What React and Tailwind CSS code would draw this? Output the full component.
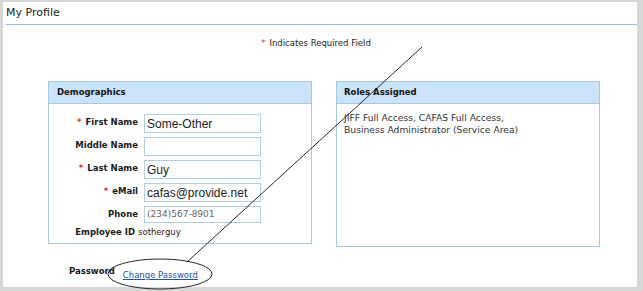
import React from "react";

const V = { fontFamily: '"DejaVu Sans", Verdana, sans-serif' };
const A = { fontFamily: '"Liberation Sans", Arial, sans-serif' };

function Row({ label, req, children, h = "h-[19px]" }) {
  return (
    <div className={`flex items-start ${h}`}>
      <div className="w-[95px] pr-[6px] pt-[3px] flex justify-end items-start text-[8.5px] font-bold text-[#1a1a1a] leading-[11px]">
        {req && <span className="text-[#e8302f] mr-[4px]">*</span>}
        <span>{label}</span>
      </div>
      {children}
    </div>
  );
}

function Input({ value, small }) {
  return (
    <div
      className={`w-[117px] ${small ? "h-[17px] text-[9px] text-[#666]" : "h-[19px] text-[12px] text-[#222]"} border border-[#b5cde0] bg-white flex items-center pl-[2px] leading-none`}
      style={small ? V : A}
    >
      {value}
    </div>
  );
}

export default function App() {
  return (
    <div className="relative w-[643px] h-[291px] bg-[#d7d7d7] pt-[2px] pl-[3px] overflow-hidden" style={V}>
      <div className="w-[634px] h-[285px] bg-white">
        <div className="ml-[3px] h-[23px] border-b border-[#93c2d6] flex items-center text-[11px] text-[#222]">
          My Profile
        </div>
        <div className="h-[25px] flex items-end justify-center pr-[8px] text-[8.5px] text-[#222]">
          <span className="text-[#e8302f] mr-[4px]">*</span>
          <span>Indicates Required Field</span>
        </div>
        <div className="flex gap-[24px] pl-[45px] mt-[31px]">
          <div className="w-[264px] h-[163px] border border-[#a7c8de]">
            <div className="h-[22px] bg-[#cbe4fb] border-b border-[#a7c8de] flex items-center pl-[8px] text-[8.5px] font-bold text-[#111]">
              Demographics
            </div>
            <div className="pt-[10px] flex flex-col gap-[4px]">
              <Row label="First Name" req>
                <Input value="Some-Other" />
              </Row>
              <Row label="Middle Name">
                <Input value="" />
              </Row>
              <Row label="Last Name" req>
                <Input value="Guy" />
              </Row>
              <Row label="eMail" req>
                <Input value="cafas@provide.net" />
              </Row>
              <Row label="Phone" h="h-[17px]">
                <Input value="(234)567-8901" small />
              </Row>
              <div className="flex items-center h-[11px] text-[8.5px] leading-[11px]">
                <div className="w-[89px] pr-[3px] text-right font-bold text-[#1a1a1a]">Employee ID</div>
                <span className="text-[#222]">sotherguy</span>
              </div>
            </div>
          </div>
          <div className="w-[264px] h-[166px] border border-[#a7c8de]">
            <div className="h-[22px] bg-[#cbe4fb] border-b border-[#a7c8de] flex items-center pl-[7px] text-[8.5px] font-bold text-[#111]">
              Roles Assigned
            </div>
            <div className="pl-[7px] pt-[8px] text-[9.2px] leading-[12px] text-[#333]">
              JIFF Full Access, CAFAS Full Access,
              <br />
              Business Administrator (Service Area)
            </div>
          </div>
        </div>
        <div className="flex items-start pl-[66px] mt-[19px] text-[8.5px]">
          <span className="font-bold text-[#1a1a1a] leading-[11px]">Password</span>
          <a className="ml-[8px] mt-[4px] text-[#2450a0] underline leading-[11px]" href="#">
            Change Password
          </a>
        </div>
      </div>
      <svg className="absolute left-0 top-0 pointer-events-none" width="643" height="291">
        <line x1="422" y1="47" x2="187" y2="262" stroke="#111" strokeWidth="0.9" />
        <ellipse cx="160" cy="274" rx="52" ry="15" fill="none" stroke="#111" strokeWidth="0.9" />
      </svg>
    </div>
  );
}
